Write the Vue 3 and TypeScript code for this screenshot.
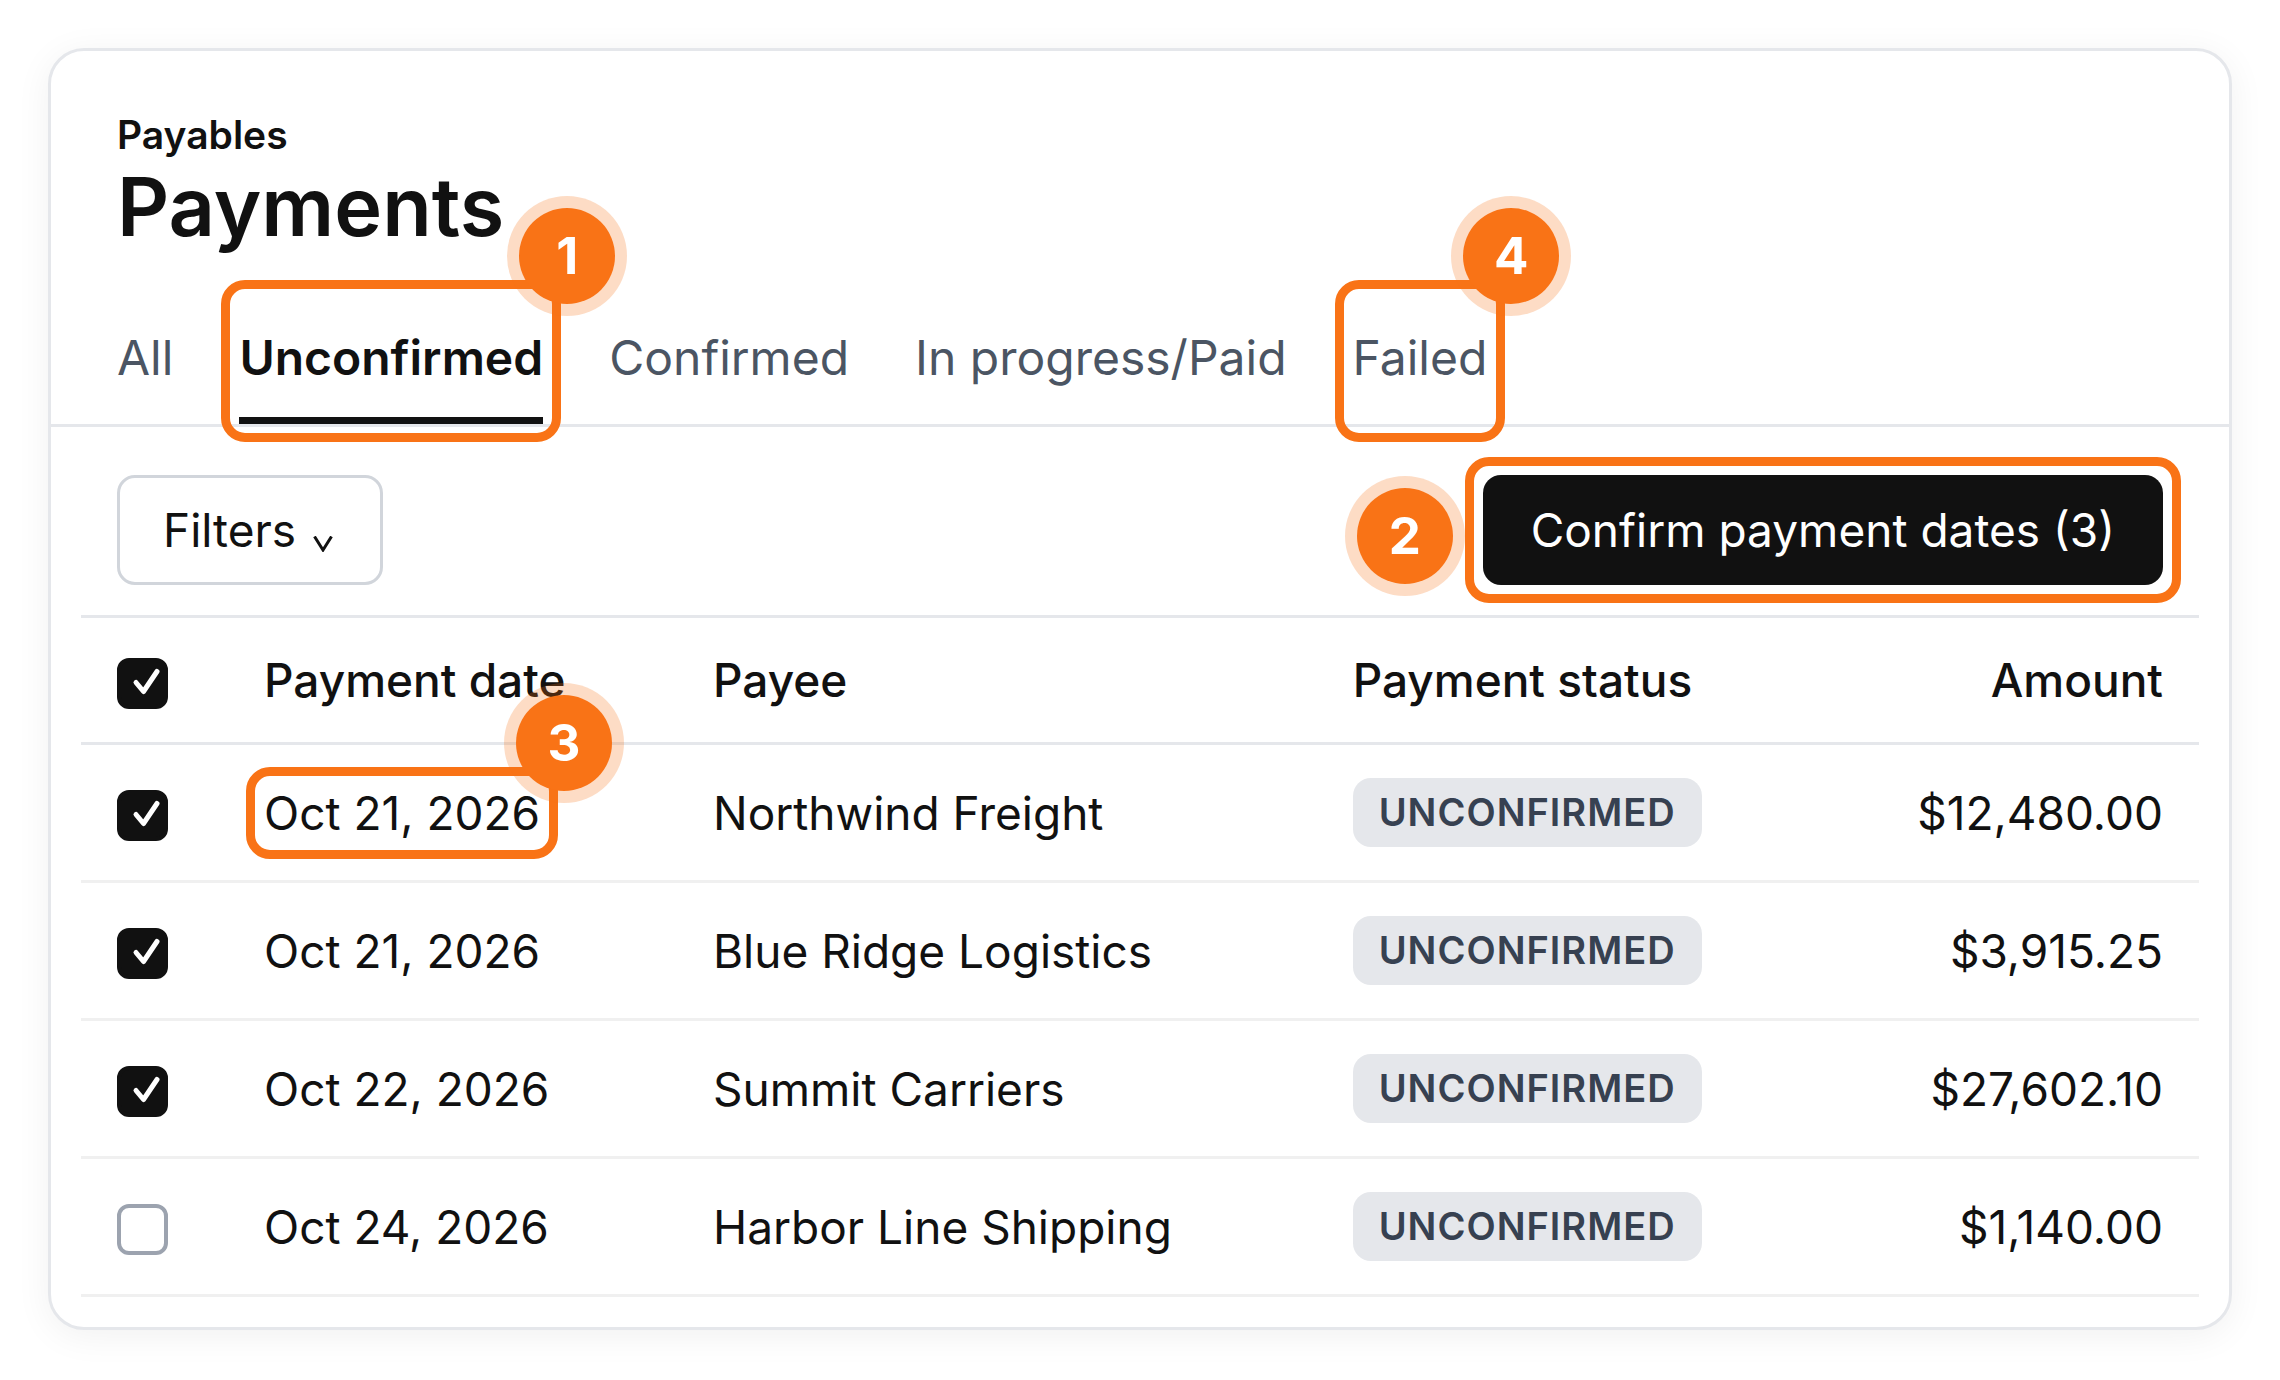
<script setup lang="ts">
import { computed, ref } from 'vue'

interface Tab {
  label: string
  step?: number
}

interface Payment {
  id: number
  date: string
  payee: string
  amount: string
  selected: boolean
  step?: number
}

const tabs: Tab[] = [
  { label: 'All' },
  { label: 'Unconfirmed', step: 1 },
  { label: 'Confirmed' },
  { label: 'In progress/Paid' },
  { label: 'Failed', step: 4 },
]
const activeTab = ref('Unconfirmed')

const payments = ref<Payment[]>([
  { id: 1, date: 'Oct 21, 2026', payee: 'Northwind Freight', amount: '$12,480.00', selected: true, step: 3 },
  { id: 2, date: 'Oct 21, 2026', payee: 'Blue Ridge Logistics', amount: '$3,915.25', selected: true },
  { id: 3, date: 'Oct 22, 2026', payee: 'Summit Carriers', amount: '$27,602.10', selected: true },
  { id: 4, date: 'Oct 24, 2026', payee: 'Harbor Line Shipping', amount: '$1,140.00', selected: false },
])

const selectedCount = computed(() => payments.value.filter((p) => p.selected).length)
const headerChecked = ref(true)

function toggleAll() {
  payments.value.forEach((p) => (p.selected = headerChecked.value))
}
</script>

<template>
  <main class="page">
    <section class="card">
      <header class="heading">
        <p class="eyebrow">Payables</p>
        <h1 class="title">Payments</h1>
      </header>

      <nav class="tabs" aria-label="Payment status">
        <button
          v-for="tab in tabs"
          :key="tab.label"
          type="button"
          class="tab"
          :class="{ active: tab.label === activeTab, marked: tab.step }"
          @click="activeTab = tab.label"
        >
          {{ tab.label }}
          <span v-if="tab.step" class="step">{{ tab.step }}</span>
        </button>
      </nav>

      <div class="toolbar">
        <button type="button" class="button">
          Filters
          <svg class="chevron" viewBox="0 0 20 16" aria-hidden="true">
            <path d="M1.5 0.5 10 14 18.5 0.5" fill="none" stroke="currentColor" stroke-width="3" />
          </svg>
        </button>
        <button type="button" class="button primary marked">
          Confirm payment dates ({{ selectedCount }})
          <span class="step before">2</span>
        </button>
      </div>

      <table class="payments">
        <thead>
          <tr>
            <th class="col-check">
              <span class="check">
                <input v-model="headerChecked" type="checkbox" aria-label="Select all payments" @change="toggleAll" />
                <svg viewBox="0 0 51 51" aria-hidden="true"><path d="M19 24.500 26.500 33.500 40 13.500" /></svg>
              </span>
            </th>
            <th class="col-date">Payment date</th>
            <th class="col-payee">Payee</th>
            <th>Payment status</th>
            <th class="amount">Amount</th>
          </tr>
        </thead>
        <tbody>
          <tr v-for="payment in payments" :key="payment.id">
            <td>
              <span class="check">
                <input v-model="payment.selected" type="checkbox" :aria-label="`Select ${payment.payee}`" />
                <svg viewBox="0 0 51 51" aria-hidden="true"><path d="M19 24.500 26.500 33.500 40 13.500" /></svg>
              </span>
            </td>
            <td>
              <span class="date" :class="{ marked: payment.step }">{{ payment.date
                }}<span v-if="payment.step" class="step">{{ payment.step }}</span></span>
            </td>
            <td>{{ payment.payee }}</td>
            <td><span class="status">UNCONFIRMED</span></td>
            <td class="amount">{{ payment.amount }}</td>
          </tr>
        </tbody>
      </table>
    </section>
  </main>
</template>

<style>
body {
  margin: 0;
  background: #ffffff;
}
</style>

<style scoped>
.page {
  --ink: #111111;
  --line: #e5e7eb;
  --accent: #f97316;
  box-sizing: border-box;
  padding: 48px;
  color: var(--ink);
  font-family: Inter, "Liberation Sans", sans-serif;
  font-size: 46px;
  font-optical-sizing: none;
}

.page * {
  box-sizing: border-box;
}

.card {
  padding-bottom: 30px;
  border: 3px solid var(--line);
  border-radius: 36px;
  background: #ffffff;
  box-shadow: 0 6px 36px rgba(0, 0, 0, 0.06);
}

.heading {
  padding: 60px 66px 43px;
}

.eyebrow,
.title {
  margin: 0;
  font-weight: 600;
}

.eyebrow {
  font-size: 39px;
  line-height: 48px;
}

.title {
  font-size: 81px;
  line-height: 96px;
}

.tabs {
  display: flex;
  gap: 66px;
  padding: 0 66px;
  border-bottom: 3px solid var(--line);
}

.tab {
  padding: 30px 0 37px;
  border: 0;
  background: none;
  color: #4b5563;
  font: inherit;
  font-size: 48px;
  line-height: 59px;
  white-space: nowrap;
}

.tab.active {
  box-shadow: inset 0 -7px var(--ink);
  color: var(--ink);
  font-weight: 600;
}

.toolbar {
  display: flex;
  align-items: center;
  justify-content: space-between;
  padding: 48px 66px 30px;
}

.button {
  padding: 24px 43px;
  border: 3px solid #d1d5db;
  border-radius: 18px;
  background: #ffffff;
  color: var(--ink);
  font: inherit;
  line-height: 56px;
  white-space: nowrap;
}

.button.primary {
  padding: 27px 48px;
  border: 0;
  background: var(--ink);
  color: #ffffff;
}

.chevron {
  width: 20px;
  height: 16px;
  margin: 0 4px;
  vertical-align: -5px;
}

/* Walkthrough outline and numbered marker */
.marked {
  position: relative;
}

.marked::after {
  content: "";
  position: absolute;
  inset: -18px;
  border: 9px solid var(--accent);
  border-radius: 24px;
  pointer-events: none;
}

.step {
  position: absolute;
  top: -90px;
  right: -72px;
  z-index: 1;
  width: 96px;
  border-radius: 50%;
  background: var(--accent);
  box-shadow: 0 0 0 12px rgba(249, 115, 22, 0.25);
  color: #ffffff;
  font-size: 51px;
  font-weight: 700;
  line-height: 96px;
  text-align: center;
}

.step.before {
  top: 13px;
  right: auto;
  left: -126px;
}

.payments {
  width: calc(100% - 60px);
  margin: 0 30px;
  border-top: 3px solid var(--line);
  border-spacing: 0;
  table-layout: fixed;
}

.payments th,
.payments td {
  height: 138px;
  padding: 0 36px;
  border-bottom: 3px solid #f0f0f0;
  line-height: 56px;
  text-align: left;
  vertical-align: middle;
  white-space: nowrap;
}

.payments th {
  height: 127px;
  border-bottom-color: var(--line);
  font-weight: 500;
}

.payments .amount {
  text-align: right;
}

.col-check {
  width: 147px;
}

.col-date {
  width: 21.2%;
}

.col-payee {
  width: 30.2%;
}

.check {
  display: inline-grid;
  width: 51px;
  height: 51px;
  vertical-align: middle;
}

.check input,
.check svg {
  grid-area: 1 / 1;
  width: 51px;
  height: 51px;
  margin: 0;
}

.check input {
  appearance: none;
  border: 4px solid #9ca3af;
  border-radius: 12px;
  background: #ffffff;
}

.check input:checked {
  border-color: var(--ink);
  background: var(--ink);
}

.check svg {
  visibility: hidden;
  fill: none;
  stroke: #ffffff;
  stroke-width: 5;
  stroke-linecap: round;
  stroke-linejoin: round;
  pointer-events: none;
}

.check input:checked + svg {
  visibility: visible;
}

.date {
  display: inline-block;
}

.status {
  display: block;
  width: fit-content;
  padding: 0 26px;
  border-radius: 18px;
  background: var(--line);
  color: #374151;
  font-size: 38px;
  font-weight: 600;
  letter-spacing: 1px;
  line-height: 69px;
}
</style>
